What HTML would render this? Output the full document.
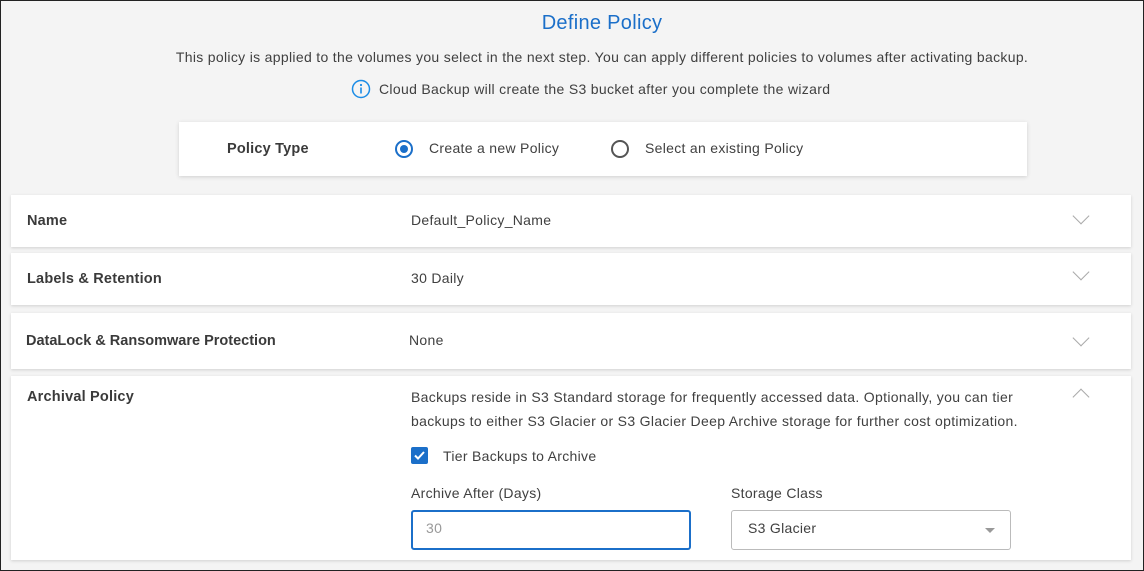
<!DOCTYPE html>
<html><head><style>
*{margin:0;padding:0;box-sizing:border-box}
body{width:1144px;height:571px;overflow:hidden;font-family:"Liberation Sans",sans-serif;color:#404040;}
.frame{position:absolute;left:0;top:0;width:1144px;height:571px;background:#f4f4f4;}
.bord{position:absolute;left:0;top:0;width:1144px;height:571px;border:1px solid #222;pointer-events:none}
.abs{position:absolute;white-space:nowrap}
.card{position:absolute;left:11px;width:1120px;background:#fff;box-shadow:0 1px 3px rgba(0,0,0,.15)}
.lbl{font-size:14.5px;font-weight:bold;color:#3a3a3a;letter-spacing:.2px}
.val{font-size:14px;color:#404040;letter-spacing:.3px}
.chev{position:absolute;width:12px;height:12px;border-right:1.5px solid #aaa;border-bottom:1.5px solid #aaa;transform:rotate(45deg)}
</style></head><body><div class="frame">
<div class="abs" style="left:0;width:1204px;text-align:center;top:12px;font-size:20px;color:#1b6fc9;letter-spacing:.3px">Define Policy</div>
<div class="abs" style="left:0;width:1204px;text-align:center;top:49px;font-size:14px;letter-spacing:.32px">This policy is applied to the volumes you select in the next step. You can apply different policies to volumes after activating backup.</div>
<svg class="abs" style="left:351px;top:79px" width="20" height="20" viewBox="0 0 20 20"><circle cx="10" cy="10" r="8.5" fill="none" stroke="#1b8ce6" stroke-width="1.5"/><circle cx="10" cy="6" r="1.1" fill="#1b8ce6"/><rect x="9.2" y="8.5" width="1.6" height="6" fill="#1b8ce6"/></svg>
<div class="abs" style="left:379px;top:81px;font-size:14px;letter-spacing:.32px">Cloud Backup will create the S3 bucket after you complete the wizard</div>
<div class="card" style="left:179px;width:848px;top:122px;height:54px;box-shadow:0 1px 4px rgba(0,0,0,.15)"></div>
<div class="abs lbl" style="left:227px;top:141px">Policy Type</div>
<div class="abs" style="left:395px;top:140px;width:18px;height:18px;border:2px solid #1b6fc9;border-radius:50%"><div style="margin:3px;width:8px;height:8px;border-radius:50%;background:#1b6fc9"></div></div>
<div class="abs val" style="left:429px;top:140px">Create a new Policy</div>
<div class="abs" style="left:611px;top:140px;width:18px;height:18px;border:2px solid #555;border-radius:50%"></div>
<div class="abs val" style="left:645px;top:140px">Select an existing Policy</div>
<div class="card" style="top:195px;height:52px"></div>
<div class="abs lbl" style="left:27px;top:213px">Name</div>
<div class="abs val" style="left:411px;top:212px">Default_Policy_Name</div>
<div class="chev" style="left:1075px;top:210px"></div>
<div class="card" style="top:253px;height:52px"></div>
<div class="abs lbl" style="left:27px;top:271px">Labels &amp; Retention</div>
<div class="abs val" style="left:411px;top:270px">30 Daily</div>
<div class="chev" style="left:1075px;top:266px"></div>
<div class="card" style="top:313px;height:56px"></div>
<div class="abs lbl" style="left:26px;top:333px;letter-spacing:0">DataLock &amp; Ransomware Protection</div>
<div class="abs val" style="left:409px;top:332px">None</div>
<div class="chev" style="left:1075px;top:332px"></div>
<div class="card" style="top:376px;height:184px"></div>
<div class="abs lbl" style="left:27px;top:389px">Archival Policy</div>
<div class="abs val" style="left:411px;top:385px;line-height:24px;letter-spacing:.33px">Backups reside in S3 Standard storage for frequently accessed data. Optionally, you can tier<br>backups to either S3 Glacier or S3 Glacier Deep Archive storage for further cost optimization.</div>
<div class="chev" style="left:1075px;top:391px;transform:rotate(225deg)"></div>
<div class="abs" style="left:411px;top:447px;width:17px;height:17px;background:#1b6fc9;border-radius:2px"><svg width="17" height="17"><path d="M4 8.5l3 3 6-6.5" fill="none" stroke="#fff" stroke-width="2"/></svg></div>
<div class="abs val" style="left:443px;top:448px">Tier Backups to Archive</div>
<div class="abs val" style="left:411px;top:485px">Archive After (Days)</div>
<div class="abs val" style="left:731px;top:485px">Storage Class</div>
<div class="abs" style="left:411px;top:510px;width:280px;height:40px;border:2px solid #1b6fc9;border-radius:3px;background:#fff"></div>
<div class="abs val" style="left:426px;top:520px;color:#999">30</div>
<div class="abs" style="left:731px;top:510px;width:280px;height:40px;border:1px solid #bbb;border-radius:3px;background:#fff"></div>
<div class="abs val" style="left:748px;top:520px">S3 Glacier</div>
<div class="abs" style="left:985px;top:528px;width:0;height:0;border-left:5px solid transparent;border-right:5px solid transparent;border-top:5px solid #999"></div>
<div class="bord"></div>
</div></body></html>
